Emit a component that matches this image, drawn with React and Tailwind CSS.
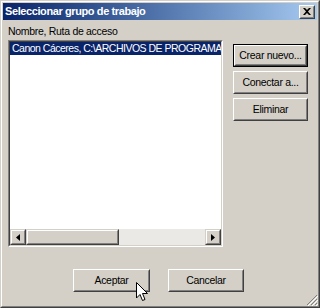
import React from 'react';

const font = { fontFamily: '"Liberation Sans", Arial, sans-serif' };

// raised win2k style button
const Btn = ({ children, isDefault, className = '' }) => {
  const inner = (
    <div className="h-full border border-t-white border-l-white border-r-[#404040] border-b-[#404040]">
      <div className="h-full flex items-center justify-center border border-t-[#d4d0c8] border-l-[#d4d0c8] border-r-[#808080] border-b-[#808080] text-[10.5px] tracking-[-0.3px] text-black leading-none whitespace-nowrap">
        {children}
      </div>
    </div>
  );
  if (isDefault) {
    return <div className={`border border-black ${className}`}>{inner}</div>;
  }
  return <div className={className}>{inner}</div>;
};

const ArrowBtn = ({ dir }) => (
  <div className="w-[16px] h-[16px] border border-t-[#d4d0c8] border-l-[#d4d0c8] border-r-[#404040] border-b-[#404040]">
    <div className="h-full flex items-center justify-center border border-t-white border-l-white border-r-[#808080] border-b-[#808080] bg-[#d4d0c8]">
      <svg width="4" height="7" viewBox="0 0 4 7">
        {dir === 'left' ? <path d="M4 0 L0 3.5 L4 7 Z" fill="#000" /> : <path d="M0 0 L4 3.5 L0 7 Z" fill="#000" />}
      </svg>
    </div>
  </div>
);

export default function App() {
  return (
    <div className="w-[320px] h-[308px] relative bg-[#d4d0c8]" style={font}>
      <div className="h-full border border-t-[#d4d0c8] border-l-[#d4d0c8] border-r-[#404040] border-b-[#404040]">
        <div className="h-full border border-t-white border-l-white border-r-[#808080] border-b-[#808080] p-px flex flex-col">
          {/* Title bar */}
          <div className="h-[17px] flex items-center justify-between bg-linear-to-r from-[#0a246a] to-[#a6caf0] pl-[2px] pr-[2px]">
            <span className="text-white font-bold text-[11px] tracking-[-0.4px] leading-none">Seleccionar grupo de trabajo</span>
            <div className="w-[16px] h-[14px] border border-t-white border-l-white border-r-[#404040] border-b-[#404040] bg-[#d4d0c8]">
              <div className="h-full flex items-center justify-center border border-t-[#d4d0c8] border-l-[#d4d0c8] border-r-[#808080] border-b-[#808080]">
                <svg width="8" height="7" viewBox="0 0 8 7">
                  <path d="M0 0 L2 0 L4 2 L6 0 L8 0 L5 3.5 L8 7 L6 7 L4 5 L2 7 L0 7 L3 3.5 Z" fill="#000" />
                </svg>
              </div>
            </div>
          </div>

          {/* Body */}
          <div className="flex-1 flex flex-col px-[5px] pt-[5px]">
            <div className="text-[10.5px] tracking-[-0.3px] leading-[13px] text-black">Nombre, Ruta de acceso</div>
            <div className="flex mt-[2px]">
              {/* List box */}
              <div className="w-[215px] h-[207px] border border-t-[#808080] border-l-[#808080] border-r-white border-b-white">
                <div className="h-full flex flex-col border border-t-[#404040] border-l-[#404040] border-r-[#d4d0c8] border-b-[#d4d0c8] bg-white">
                  <div className="flex-1 overflow-hidden">
                    <div className="h-[13px] bg-[#0a246a] text-white text-[10.5px] tracking-[-0.5px] leading-[13px] pl-[2px] whitespace-nowrap overflow-hidden">
                      Canon Cáceres, C:\ARCHIVOS DE PROGRAMA\MICROSOFT OFFICE\OFFICE
                    </div>
                  </div>
                  {/* horizontal scrollbar */}
                  <div className="h-[16px] flex bg-[#ebe9e5]">
                    <ArrowBtn dir="left" />
                    <div className="flex-1 flex">
                      <div className="w-[93px] h-[16px] border border-t-[#d4d0c8] border-l-[#d4d0c8] border-r-[#404040] border-b-[#404040]">
                        <div className="h-full border border-t-white border-l-white border-r-[#808080] border-b-[#808080] bg-[#d4d0c8]" />
                      </div>
                    </div>
                    <ArrowBtn dir="right" />
                  </div>
                </div>
              </div>

              {/* Side buttons */}
              <div className="flex flex-col ml-[10px] mt-[4px] gap-[4px]">
                <Btn isDefault className="w-[75px] h-[23px]">Crear nuevo...</Btn>
                <Btn className="w-[75px] h-[23px]">Conectar a...</Btn>
                <Btn className="w-[75px] h-[23px]">Eliminar</Btn>
              </div>
            </div>

            {/* Bottom buttons */}
            <div className="flex mt-[22px] pl-[65px] gap-[18px]">
              <Btn className="w-[77px] h-[23px]">Aceptar</Btn>
              <Btn className="w-[76px] h-[23px]">Cancelar</Btn>
            </div>
          </div>
        </div>
      </div>

      {/* size grip */}
      <svg className="absolute right-[2px] bottom-[2px]" width="12" height="12" viewBox="0 0 12 12">
        <path d="M11 1 L1 11 M11 5 L5 11 M11 9 L9 11" stroke="#808080" strokeWidth="1" />
        <path d="M12 2 L2 12 M12 6 L6 12 M12 10 L10 12" stroke="#fff" strokeWidth="1" />
      </svg>

      {/* mouse cursor */}
      <svg className="absolute left-[136px] top-[282px]" width="13" height="20" viewBox="0 0 13 20">
        <path d="M0.5 0.5 L0.5 16 L4 12.5 L6.5 18.5 L9 17.5 L6.5 11.5 L11.5 11.5 Z" fill="#fff" stroke="#000" strokeWidth="1" strokeLinejoin="miter" />
      </svg>
    </div>
  );
}
